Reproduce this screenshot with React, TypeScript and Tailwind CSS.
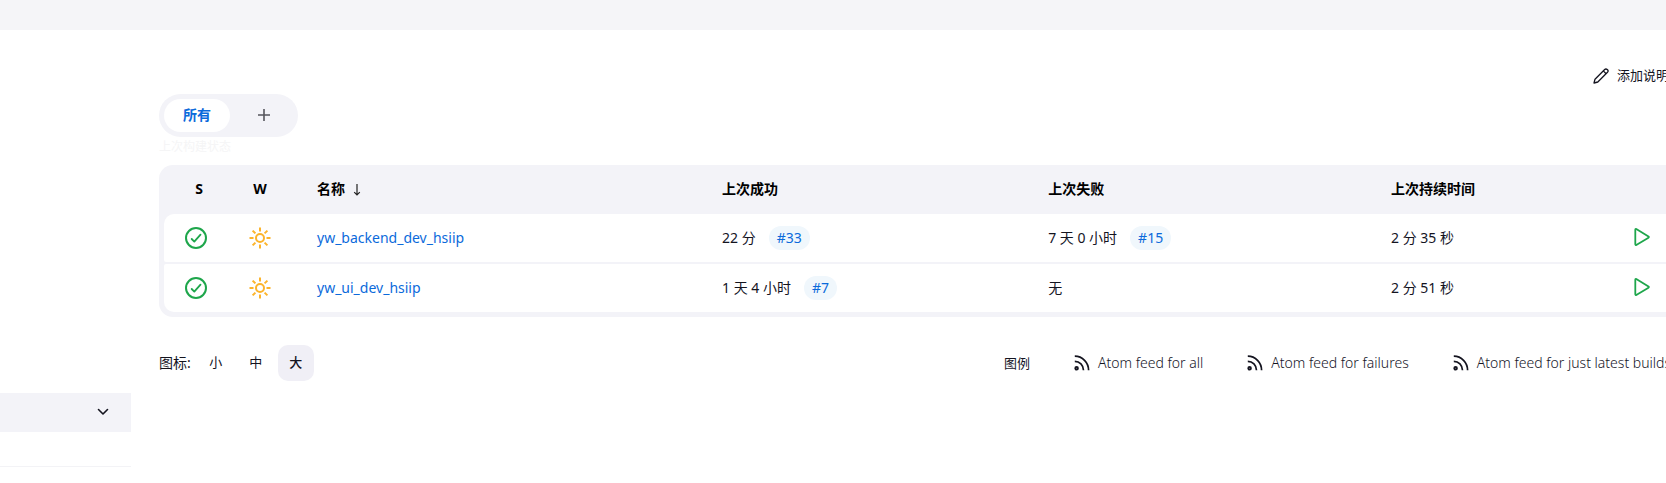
import React from "react";

interface Build {
  time: string;
  number?: string;
}

interface Job {
  name: string;
  success: Build;
  failure: Build;
  duration: string;
}

const jobs: Job[] = [
  {
    name: "yw_backend_dev_hsiip",
    success: { time: "22 分", number: "#33" },
    failure: { time: "7 天 0 小时", number: "#15" },
    duration: "2 分 35 秒",
  },
  {
    name: "yw_ui_dev_hsiip",
    success: { time: "1 天 4 小时", number: "#7" },
    failure: { time: "无" },
    duration: "2 分 51 秒",
  },
];

const feeds = ["Atom feed for all", "Atom feed for failures", "Atom feed for just latest builds"];

const SuccessIcon = () => (
  <svg className="w-[22px] h-[22px]" viewBox="0 0 22 22" fill="none" stroke="#1ea64b" strokeLinecap="round" strokeLinejoin="round">
    <circle cx="11" cy="11" r="10" strokeWidth="2" />
    <path d="M6.7 12l2.6 2.6 6.2-7" strokeWidth="1.8" />
  </svg>
);

const SunIcon = () => (
  <svg className="w-[22px] h-[22px]" viewBox="0 0 22 22" fill="none" stroke="#fcb42c" strokeWidth="2">
    <circle cx="11" cy="11" r="4" />
    <path d="M11 .5v4M11 17.500v4M.5 11h4M17.500 11h4M3.600 3.600l2.800 2.800M15.600 15.600l2.800 2.800M3.600 18.400l2.800-2.800M15.600 6.400l2.800-2.800" />
  </svg>
);

const PlayIcon = () => (
  <svg className="w-4 h-[18px]" viewBox="0 0 16 18" fill="none" stroke="#1ea64b" strokeWidth="1.8" strokeLinejoin="round">
    <path d="M1.300 1.700v14.600c0 .6.500.9 1 .6l12.200-7.200c.5-.3.5-1 0-1.300L2.300 1.100c-.5-.3-1 0-1 .6z" />
  </svg>
);

const FeedIcon = () => (
  <svg className="w-4 h-4" viewBox="0 0 16 16" fill="none" stroke="#14141f" strokeWidth="1.7">
    <circle cx="2.600" cy="13.300" r="1.400" fill="#777782" />
    <path d="M.8 6.300c4.800 0 8.700 3.900 8.700 9" />
    <path d="M.8 1.200c7.600 0 13.800 6.200 13.800 14.100" />
  </svg>
);

const PencilIcon = () => (
  <svg className="w-4 h-4" viewBox="0 0 16 16" fill="none" stroke="#14141f" strokeWidth="1.300" strokeLinejoin="round">
    <path d="M1 15l1-3.800L11.700 1.500c.7-.7 1.800-.7 2.500 0l.3.300c.7.7.7 1.800 0 2.500L4.800 14 1 15z" />
    <path d="M10.300 2.900l2.800 2.800" />
  </svg>
);

const BuildCell: React.FC<{ build: Build }> = ({ build }) => (
  <div className="flex items-center gap-[13px]">
    <span>{build.time}</span>
    {build.number && (
      <a href="#build" className="h-6 px-2 leading-6 rounded-full bg-[#f0f7fc] text-[#0b6adb]">
        {build.number}
      </a>
    )}
  </div>
);

const JobTable = () => (
  <div className="rounded-[14px] bg-[#f3f3f8] px-[5px] pb-[3px]">
    <table className="w-full table-fixed border-separate border-spacing-x-0 border-spacing-y-[2px] text-left">
      <colgroup>
        <col className="w-[66px]" />
        <col className="w-[60px]" />
        <col className="w-[26.7%]" />
        <col className="w-[21.5%]" />
        <col className="w-[22.6%]" />
        <col />
        <col className="w-[74px]" />
      </colgroup>
      <thead>
        <tr className="h-[45px] text-sm font-bold text-black">
          <th className="pl-1 pb-[2px] text-center">S</th>
          <th className="pb-[2px] text-center">W</th>
          <th className="pl-[27px] pb-[2px]">
            名称
            <svg className="inline-block ml-2 w-2 h-3" viewBox="0 0 8 12" fill="none" stroke="#222" strokeWidth="1.200">
              <path d="M4 0v11M1.200 8.200L4 11l2.800-2.800" />
            </svg>
          </th>
          <th className="pl-[27px] pb-[2px]">上次成功</th>
          <th className="pl-[27px] pb-[2px]">上次失败</th>
          <th className="pl-[27px] pb-[2px]">上次持续时间</th>
          <th aria-label="build"></th>
        </tr>
      </thead>
      <tbody>
        {jobs.map((job, i) => (
          <tr key={job.name} className="h-12">
            <td className={`bg-white pl-[21px] ${i === 0 ? "rounded-tl-[10px] rounded-bl-[2px]" : "rounded-tl-[2px] rounded-bl-[10px]"}`}>
              <SuccessIcon />
            </td>
            <td className="bg-white pl-[19px]">
              <SunIcon />
            </td>
            <td className="bg-white pl-[27px]">
              <a href="#job" className="text-[#0b6adb]">{job.name}</a>
            </td>
            <td className="bg-white pl-[27px]">
              <BuildCell build={job.success} />
            </td>
            <td className="bg-white pl-[27px]">
              <BuildCell build={job.failure} />
            </td>
            <td className="bg-white pl-[27px]">{job.duration}</td>
            <td className={`bg-white pl-[27px] pb-[2px] ${i === 0 ? "rounded-tr-[10px] rounded-br-[2px]" : "rounded-tr-[2px] rounded-br-[10px]"}`}>
              <button type="button" aria-label="build" className="block">
                <PlayIcon />
              </button>
            </td>
          </tr>
        ))}
      </tbody>
    </table>
  </div>
);

const App: React.FC = () => {
  return (
    <div className="min-h-screen overflow-hidden bg-white font-['Noto_Sans','Noto_Sans_CJK_SC',sans-serif] text-sm text-[#14141f]">
      <header className="h-[30px] bg-[#f5f5f8]"></header>

      <div className="flex">
        {/* Side panel */}
        <aside className="w-[131px] shrink-0 pt-[363px]">
          <button type="button" aria-label="toggle" className="flex w-full h-[39px] items-center justify-end bg-[#f3f3f8] pr-[22px] pb-[2px]">
            <svg className="w-3 h-2" viewBox="0 0 12 8" fill="none" stroke="#14141f" strokeWidth="1.600" strokeLinecap="round" strokeLinejoin="round">
              <path d="M1.500 1.500L6 6l4.500-4.500" />
            </svg>
          </button>
          <div className="h-[35px] border-b border-[#f3f3f6]"></div>
        </aside>

        <main className="ml-7 -mr-5 flex-1 min-w-0 pt-[27px]">
          <div className="flex h-[37px] items-center justify-end pr-[17px]">
            <button type="button" className="flex items-center gap-2 text-[13px]">
              <PencilIcon />
              添加说明
            </button>
          </div>

          {/* View tabs */}
          <div className="relative flex w-fit rounded-full bg-[#f3f3f8] p-[5px] mb-7">
            <button type="button" className="w-[66px] h-[33px] rounded-full bg-white pb-[2px] font-bold text-[#0b6adb]">
              所有
            </button>
            <button type="button" aria-label="new view" className="flex w-[63px] h-[33px] items-center justify-center pl-1 pb-[1px]">
              <svg className="w-3 h-3" viewBox="0 0 12 12" stroke="#55555c" strokeWidth="1.600">
                <path d="M6 0v12M0 6h12" />
              </svg>
            </button>
            <span className="absolute left-0 top-full text-xs leading-5 text-[#f5f5f6] whitespace-nowrap">上次构建状态</span>
          </div>

          <JobTable />

          {/* Icon size and feeds */}
          <div className="mt-7 flex h-9 items-center justify-between pr-[15px]">
            <div className="flex items-center">
              <span className="mr-[7px]">图标:</span>
              <div className="flex gap-1 text-[13px]">
                <button type="button" className="w-9 h-9 rounded-[10px] pb-[2px]">小</button>
                <button type="button" className="w-9 h-9 rounded-[10px] pb-[2px]">中</button>
                <button type="button" className="w-9 h-9 rounded-[10px] pb-[2px] bg-[#f0eff6] font-medium">大</button>
              </div>
            </div>
            <div className="flex items-center gap-11 font-light">
              <button type="button" className="text-[13px] font-normal">图例</button>
              {feeds.map((feed) => (
                <a key={feed} href="#feed" className="flex items-center gap-2 whitespace-nowrap">
                  <FeedIcon />
                  {feed}
                </a>
              ))}
            </div>
          </div>
        </main>
      </div>
    </div>
  );
};

export default App;
